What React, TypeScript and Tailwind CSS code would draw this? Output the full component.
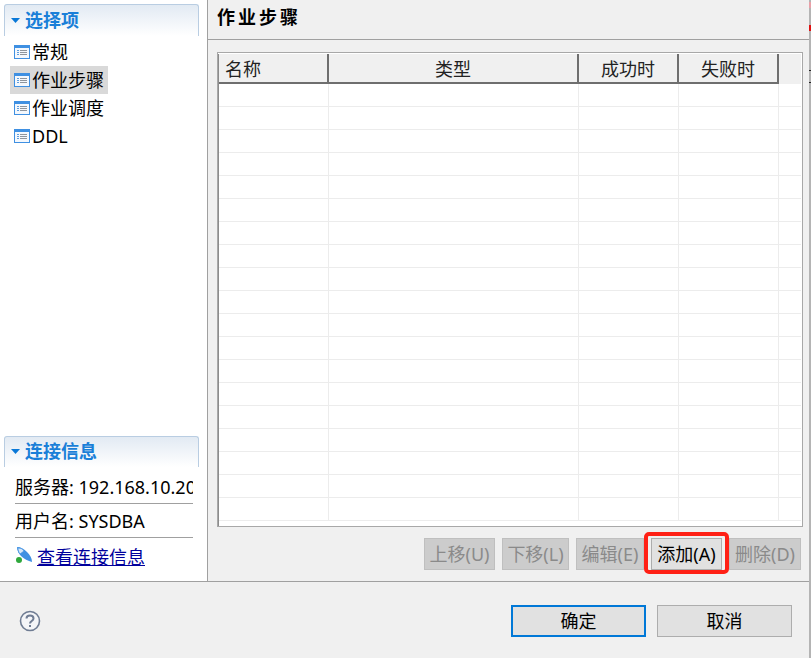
const font = "font-['Noto_Sans','Noto_Sans_CJK_SC',sans-serif]";

const navItems = ["常规", "作业步骤", "作业调度", "DDL"];
const columns = [
  { label: "名称", width: "w-[110px]", align: "justify-start pl-[6px]" },
  { label: "类型", width: "w-[250px]", align: "justify-center" },
  { label: "成功时", width: "w-[100px]", align: "justify-center" },
  { label: "失败时", width: "w-[100px]", align: "justify-center" },
];
const rows = Array.from({ length: 19 }, (_, i) => i);

function PageIcon() {
  return (
    <svg width="16" height="14" viewBox="0 0 16 14" className="shrink-0">
      <rect x="0.5" y="0.5" width="15" height="13" fill="#f4f8fd" stroke="#3f90e2" />
      <rect x="1" y="1" width="14" height="2" fill="#3f90e2" />
      <rect x="3" y="5" width="2" height="1" fill="#5e9ddd" />
      <rect x="3" y="7" width="2" height="1" fill="#5e9ddd" />
      <rect x="3" y="9" width="2" height="1" fill="#5e9ddd" />
      <rect x="6" y="5" width="7" height="1" fill="#8f959c" />
      <rect x="6" y="7" width="7" height="1" fill="#8f959c" />
      <rect x="6" y="9" width="7" height="1" fill="#8f959c" />
    </svg>
  );
}

function SectionHeader({ title, height }: { title: string; height: string }) {
  return (
    <div className={`${height} ml-[4px] flex w-[195px] items-center gap-[5px] rounded-t-[3px] border-x border-t border-[#b9cde2] bg-gradient-to-b from-[#e2eaf3] to-white pl-[6px]`}>
      <svg width="9" height="5" viewBox="0 0 9 5" className="mt-[1px]">
        <path d="M0 0h9L4.5 5z" fill="#0a78d7" />
      </svg>
      <span className="text-[18px] leading-none font-bold text-[#1a7fd8]">{title}</span>
    </div>
  );
}

function ActionButton({ label, width, enabled }: { label: string; width: string; enabled?: boolean }) {
  return (
    <div
      className={`${width} flex h-[32px] items-center justify-center border text-[18px] leading-none ${
        enabled ? "border-[#adadad] bg-[#e1e1e1] text-black" : "border-[#bfbfbf] bg-[#cccccc] text-[#8a8a8a]"
      }`}
    >
      {label}
    </div>
  );
}

export default function App() {
  return (
    <div className={`${font} flex h-[658px] w-[811px] overflow-hidden bg-[#f0f0f0] text-black`}>
      <div className="flex w-[809px] shrink-0 flex-col">
        <div className="flex h-[582px] border-b border-[#a0a0a0]">
          {/* left panel */}
          <div className="flex w-[208px] shrink-0 flex-col border-r border-[#a0a0a0] bg-white pt-[4px]">
            <SectionHeader title="选择项" height="h-[32px] pb-[1px]" />
            <div className="mt-[2px] flex flex-col">
              {navItems.map((item) => (
                <div key={item} className="flex h-[28px] pl-[10px]">
                  <div
                    className={`flex items-center gap-[2px] px-[4px] text-[18px] leading-none ${
                      item === "作业步骤" ? "bg-[#d9d9d9]" : ""
                    }`}
                  >
                    <PageIcon />
                    <span className="mb-[1px]">{item}</span>
                  </div>
                </div>
              ))}
            </div>

            <div className="mt-auto pb-[6px]">
              <SectionHeader title="连接信息" height="h-[31px] pb-[2px]" />
              <div className="mx-[15px] mt-[3px] flex w-[178px] flex-col text-[18px] leading-none">
                <div className="flex h-[34px] items-center overflow-hidden whitespace-nowrap border-b border-[#a0a0a0]">
                  服务器: 192.168.10.20
                </div>
                <div className="flex h-[34px] items-center border-b border-[#a0a0a0]">用户名: SYSDBA</div>
                <div className="flex h-[37px] items-center gap-[4px]">
                  <svg width="18" height="18" viewBox="0 0 18 18" className="mb-[4px] shrink-0">
                    <path d="M2 1c4 0 7 2 10 5s5 6 5 10c-4-1-8-3-11-6C4 8 2 5 2 1z" fill="#3f90e2" />
                    <path d="M3 2c3 0 5 1 6 3L5 8C3.500 6 3 4 3 2z" fill="#d6e6f7" stroke="#3f90e2" strokeWidth="0.7" />
                    <circle cx="4" cy="14" r="3" fill="#2fa83c" />
                  </svg>
                  <span className="text-[#00009c] underline">查看连接信息</span>
                </div>
              </div>
            </div>
          </div>

          {/* right panel */}
          <div className="flex flex-1 flex-col">
            <div className="flex h-[40px] items-center border-b border-[#a0a0a0] pb-[5px] pl-[9px] text-[18px] leading-none font-bold tracking-[3px]">
              作业步骤
            </div>
            <div className="mt-[12px] ml-[9px] flex h-[475px] w-[586px] flex-col overflow-hidden border border-[#a8a8a8] bg-white pr-[1px] pt-[1px]">
              <div className="flex min-h-0 flex-1 flex-col border-l border-[#8c8c8c]">
                <div className="flex h-[30px] shrink-0 bg-[#f0f0f0]">
                  {columns.map((c) => (
                    <div
                      key={c.label}
                      className={`${c.width} ${c.align} flex items-center border-b-2 border-r-2 border-b-[#6e6e6e] border-r-[#6e6e6e] pt-[2px] text-[18px] leading-none text-[#222]`}
                    >
                      {c.label}
                    </div>
                  ))}
                </div>
                {rows.map((r) => (
                  <div key={r} className="flex h-[23px] shrink-0 border-b border-[#ececec]">
                    {columns.map((c) => (
                      <div key={c.label} className={`${c.width} border-r border-[#ececec]`} />
                    ))}
                  </div>
                ))}
              </div>
            </div>
            <div className="mt-[11px] ml-[216px] flex gap-[7px]">
              <ActionButton label="上移(U)" width="w-[71px]" />
              <ActionButton label="下移(L)" width="w-[67px]" />
              <ActionButton label="编辑(E)" width="w-[68px]" />
              <div className="relative">
                <ActionButton label="添加(A)" width="w-[71px]" enabled />
                <div className="absolute -top-[6px] -right-[7px] -bottom-[4px] -left-[7px] rounded-[5px] border-[4px] border-[#ff2015]" />
              </div>
              <ActionButton label="删除(D)" width="w-[72px]" />
            </div>
          </div>
        </div>

        {/* footer */}
        <div className="flex flex-1 items-center pt-[2px]">
          <svg width="22" height="22" viewBox="0 0 22 22" className="ml-[19px]">
            <circle cx="11" cy="11" r="9.500" fill="#f4f5f8" stroke="#6f7c93" strokeWidth="1.6" />
            <path d="M7.500 8.500c0-2 1.500-3 3.500-3s3.500 1 3.500 3c0 2.500-3.500 2.500-3.500 5" fill="none" stroke="#6f7c93" strokeWidth="2" />
            <rect x="10" y="15" width="2" height="2" fill="#6f7c93" />
          </svg>
          <div className="ml-[470px] flex h-[32px] w-[135px] items-center justify-center border-2 border-[#0078d7] bg-[#e1e1e1] text-[18px] leading-none">
            确定
          </div>
          <div className="ml-[11px] flex h-[32px] w-[135px] items-center justify-center border border-[#adadad] bg-[#e1e1e1] text-[18px] leading-none">
            取消
          </div>
        </div>
      </div>

      {/* sliver of the window behind */}
      <div className="flex w-[2px] shrink-0 flex-col bg-[#b4b4b4]">
        <div className="mt-[2px] h-[6px] bg-[#e8a0a8]" />
        <div className="mt-[17px] h-[6px] bg-[#e01010]" />
        <div className="mt-[39px] h-[1px] bg-[#222]" />
        <div className="mt-[11px] h-[1px] bg-[#222]" />
      </div>
    </div>
  );
}
